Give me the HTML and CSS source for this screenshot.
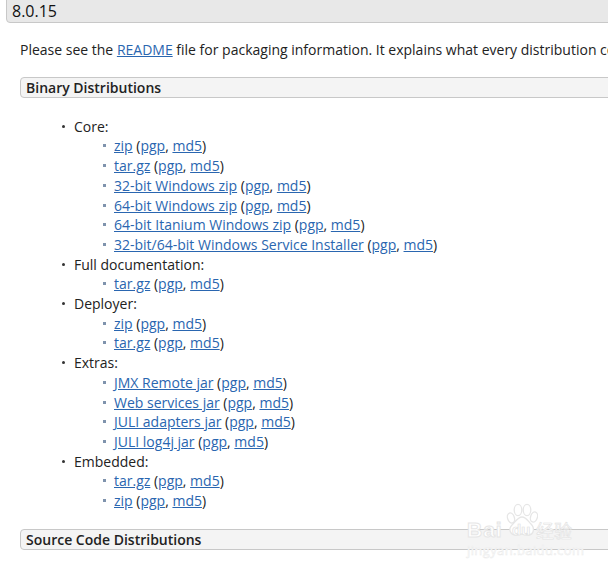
FILE: index.html
```html
<!DOCTYPE html>
<html lang="en">
<head>
<meta charset="utf-8">
<title>8.0.15</title>
<link rel="stylesheet" href="styles.css">
</head>
<body>
<h3 class="version">8.0.15</h3>
<div class="content">
  <p class="intro">Please see the <a href="#">README</a> file for packaging information. It explains what every distribution contains.</p>
  <h4 class="section">Binary Distributions</h4>
  <ul class="outer">
    <li>Core:
      <ul class="inner">
        <li><a href="#">zip</a> (<a href="#">pgp</a>, <a href="#">md5</a>)</li>
        <li><a href="#">tar.gz</a> (<a href="#">pgp</a>, <a href="#">md5</a>)</li>
        <li><a href="#">32-bit Windows zip</a> (<a href="#">pgp</a>, <a href="#">md5</a>)</li>
        <li><a href="#">64-bit Windows zip</a> (<a href="#">pgp</a>, <a href="#">md5</a>)</li>
        <li><a href="#">64-bit Itanium Windows zip</a> (<a href="#">pgp</a>, <a href="#">md5</a>)</li>
        <li><a href="#">32-bit/64-bit Windows Service Installer</a> (<a href="#">pgp</a>, <a href="#">md5</a>)</li>
      </ul>
    </li>
    <li>Full documentation:
      <ul class="inner">
        <li><a href="#">tar.gz</a> (<a href="#">pgp</a>, <a href="#">md5</a>)</li>
      </ul>
    </li>
    <li>Deployer:
      <ul class="inner">
        <li><a href="#">zip</a> (<a href="#">pgp</a>, <a href="#">md5</a>)</li>
        <li><a href="#">tar.gz</a> (<a href="#">pgp</a>, <a href="#">md5</a>)</li>
      </ul>
    </li>
    <li>Extras:
      <ul class="inner">
        <li><a href="#">JMX Remote jar</a> (<a href="#">pgp</a>, <a href="#">md5</a>)</li>
        <li><a href="#">Web services jar</a> (<a href="#">pgp</a>, <a href="#">md5</a>)</li>
        <li><a href="#">JULI adapters jar</a> (<a href="#">pgp</a>, <a href="#">md5</a>)</li>
        <li><a href="#">JULI log4j jar</a> (<a href="#">pgp</a>, <a href="#">md5</a>)</li>
      </ul>
    </li>
    <li>Embedded:
      <ul class="inner">
        <li><a href="#">tar.gz</a> (<a href="#">pgp</a>, <a href="#">md5</a>)</li>
        <li><a href="#">zip</a> (<a href="#">pgp</a>, <a href="#">md5</a>)</li>
      </ul>
    </li>
  </ul>
  <h4 class="section">Source Code Distributions</h4>
</div>
<div class="watermark">
  <svg class="paw" width="32" height="36" viewBox="0 0 32 36" fill="#fff" stroke="#e6e6e6" stroke-width="1.3">
    <ellipse cx="5" cy="15" rx="3.4" ry="5.2" transform="rotate(-18 5 15)"/>
    <ellipse cx="12" cy="7" rx="3.8" ry="5.6"/>
    <ellipse cx="21" cy="7" rx="3.8" ry="5.6"/>
    <ellipse cx="28" cy="14" rx="3.4" ry="5.2" transform="rotate(18 28 14)"/>
    <path d="M16 14c4 0 6 4 9 7 4 4 3 11-3 11-2 0-4-1-6-1s-4 1-6 1c-6 0-8-6-4-10 3-3 6-8 10-8z"/>
  </svg>
  <div class="wm-bai">Bai</div>
  <div class="wm-du">du</div>
  <div class="wm-cn">经验</div>
  <div class="wm-url">jingyan.baidu.com</div>
</div>
</body>
</html>
```
FILE: styles.css
```css
html, body {
  margin: 0;
  padding: 0;
  height: 570px;
  overflow: hidden;
}
body {
  position: relative;
  background: #fff;
  color: #222;
  font-family: "Open Sans", "Liberation Sans", sans-serif;
  font-size: 14px;
  line-height: 19.7px;
  width: 608px;
}
a {
  color: #2a66b0;
  text-decoration: underline;
}
.version {
  margin: -10px -40px 0 6px;
  height: 33px;
  box-sizing: border-box;
  padding: 9px 5px 0;
  background: #e8e8e8;
  border: 1px solid #c8c8c8;
  border-radius: 4px;
  font-size: 16px;
  font-weight: 500;
  line-height: 22px;
  color: #111;
}
.content {
  margin-left: 20px;
  width: 700px;
}
.intro {
  margin: 17px 0 0;
  white-space: nowrap;
}
.section {
  margin: 17px 0 0;
  height: 21px;
  box-sizing: border-box;
  padding: 0 5px;
  background: #f4f4f4;
  border: 1px solid #c8c8c8;
  border-radius: 4px;
  font-size: 14px;
  font-weight: 600;
  line-height: 19px;
  color: #222;
}
.outer {
  margin: 19px 0 18.2px;
  padding: 0 0 0 54px;
  list-style: none;
}
.inner {
  margin: 0;
  padding: 0 0 0 40px;
  list-style: none;
}
.outer > li, .inner > li {
  position: relative;
}
.outer > li::before {
  content: "";
  position: absolute;
  left: -12px;
  top: 8px;
  width: 3px;
  height: 3px;
  border-radius: 50%;
  background: #333;
}
.inner > li::before {
  content: "";
  position: absolute;
  left: -11px;
  top: 8px;
  width: 3px;
  height: 3px;
  background: #7f93ad;
}
.watermark {
  position: absolute;
  left: 466px;
  top: 503px;
  width: 110px;
  height: 54px;
  color: #fff;
  -webkit-text-stroke: 1px #e6e6e6;
  pointer-events: none;
}
.paw {
  position: absolute;
  left: 40px;
  top: 0;
}
.wm-bai {
  position: absolute;
  left: 1px;
  top: 14px;
  font-family: "Liberation Sans", sans-serif;
  font-size: 21px;
  font-weight: 700;
  line-height: 26px;
  letter-spacing: 1px;
  white-space: nowrap;
}
.wm-du {
  position: absolute;
  left: 46px;
  top: 18px;
  font-family: "Liberation Sans", sans-serif;
  font-size: 15px;
  font-weight: 700;
  line-height: 18px;
  -webkit-text-stroke: 0.7px #e2e2e2;
}
.wm-cn {
  position: absolute;
  left: 70px;
  top: 15px;
  font-family: "Noto Sans CJK SC", sans-serif;
  font-size: 18px;
  font-weight: 400;
  line-height: 24px;
  white-space: nowrap;
  -webkit-text-stroke: 0.6px #e2e2e2;
}
.wm-url {
  position: absolute;
  left: 1px;
  top: 40px;
  font-size: 13px;
  line-height: 14px;
  letter-spacing: 0.4px;
  white-space: nowrap;
  -webkit-text-stroke: 0.5px #ebebeb;
}
```
